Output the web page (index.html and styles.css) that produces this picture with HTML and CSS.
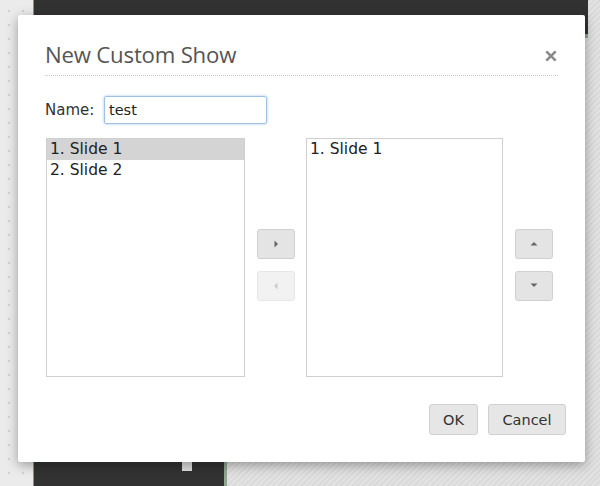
FILE: index.html
```html
<!DOCTYPE html>
<html>
<head>
<meta charset="utf-8">
<link rel="stylesheet" href="styles.css">
</head>
<body>
<div class="desk">
  <div class="rail"></div>
  <div class="stage">
    <div class="slide-top"></div>
    <div class="slide-bottom"><span class="cam"></span></div>
  </div>
</div>
<div class="dialog">
  <div class="header">
    <h1 class="title">New Custom Show</h1>
    <span class="close" aria-label="Close">
      <svg width="12" height="12" viewBox="0 0 12 12"><path d="M1.3 1.3 L10.7 10.7 M10.7 1.3 L1.3 10.7" stroke="#8a8a8a" stroke-width="2.6" stroke-linecap="butt"/></svg>
    </span>
  </div>
  <div class="name-row">
    <label class="name-label">Name:</label>
    <div class="name-input">test</div>
  </div>
  <div class="lists">
    <div class="listbox">
      <div class="item selected">1. Slide 1</div>
      <div class="item">2. Slide 2</div>
    </div>
    <div class="mid-buttons">
      <button class="sq">
        <svg width="6" height="8" viewBox="0 0 6 8"><path d="M1.5 0.5 L5 4 L1.5 7.5 Z" fill="#666"/></svg>
      </button>
      <button class="sq disabled">
        <svg width="6" height="8" viewBox="0 0 6 8"><path d="M4.5 0.5 L1 4 L4.5 7.5 Z" fill="#ccc"/></svg>
      </button>
    </div>
    <div class="listbox narrow">
      <div class="item">1. Slide 1</div>
    </div>
    <div class="mid-buttons end">
      <button class="sq">
        <svg width="8" height="5" viewBox="0 0 8 5"><path d="M0.5 4.5 L4 1 L7.5 4.5 Z" fill="#666"/></svg>
      </button>
      <button class="sq">
        <svg width="8" height="5" viewBox="0 0 8 5"><path d="M0.5 0.5 L4 4 L7.5 0.5 Z" fill="#666"/></svg>
      </button>
    </div>
  </div>
  <div class="footer">
    <button class="btn ok">OK</button>
    <button class="btn cancel">Cancel</button>
  </div>
</div>
</body>
</html>
```
FILE: styles.css
```css
html, body {
  margin: 0;
  padding: 0;
  width: 600px;
  height: 486px;
  overflow: hidden;
  font-family: "DejaVu Sans", "Open Sans", sans-serif;
}
body {
  background: #e6e6e6;
  position: relative;
}
.desk {
  display: flex;
  height: 486px;
}
.rail {
  width: 33px;
  background-color: #ebebeb;
  background-image: radial-gradient(circle, #d2d2d2 1.3px, transparent 1.6px);
  background-size: 14px 14px;
  background-position: 2px 4px;
}
.stage {
  flex: 1;
  display: flex;
  flex-direction: column;
  justify-content: space-between;
  background: repeating-linear-gradient(135deg, #dadada 0 2px, #e2e2e2 2px 4px);
}
.slide-top {
  height: 34px;
  margin-right: 12px;
  background: #323232;
  border-bottom: 4px solid #8ea58e;
  border-left: 1px solid #7d9a7d;
}
.slide-bottom {
  position: relative;
  height: 24px;
  width: 190px;
  background: #323232;
  border-right: 3px solid #8ea58e;
  border-left: 1px solid #7d9a7d;
}
.cam {
  position: absolute;
  left: 148px;
  top: 0;
  width: 10px;
  height: 9px;
  background: #ddd;
}
.dialog {
  position: absolute;
  left: 18px;
  top: 15px;
  width: 567px;
  height: 447px;
  box-sizing: border-box;
  background: #fff;
  border-radius: 2px;
  box-shadow: 0 3px 12px rgba(0,0,0,0.35);
  padding: 29px 27px 0 27px;
  display: flex;
  flex-direction: column;
}
.header {
  display: flex;
  justify-content: space-between;
  align-items: center;
  height: 22px;
  padding-bottom: 9px;
  border-bottom: 1px dotted #c8c8c8;
}
.title {
  margin: 0;
  font-family: "Open Sans", "DejaVu Sans", sans-serif;
  font-size: 22.2px;
  font-weight: 400;
  color: #555;
  line-height: 28px;
  letter-spacing: -0.2px;
}
.close {
  display: flex;
  width: 12px;
  height: 12px;
  margin-right: 1px;
  margin-top: 1px;
}
.name-row {
  display: flex;
  align-items: center;
  margin-top: 20px;
  height: 28px;
}
.name-label {
  font-size: 15px;
  color: #333;
  width: 59px;
}
.name-input {
  width: 163px;
  height: 28px;
  box-sizing: border-box;
  border: 1px solid #9ec1e6;
  box-shadow: 0 0 3px rgba(110,160,220,0.6);
  border-radius: 2px;
  font-size: 14.5px;
  padding: 2px 4px;
  line-height: 22px;
  color: #222;
}
.lists {
  display: flex;
  margin-top: 14px;
  height: 239px;
  align-items: stretch;
}
.listbox {
  flex: 0 0 199px;
  box-sizing: border-box;
  border: 1px solid #cfcfcf;
  background: #fff;
}
.listbox:first-child {
  margin-left: 1px;
}
.listbox.narrow {
  flex-basis: 197px;
}
.item {
  font-size: 15.5px;
  line-height: 21px;
  height: 21px;
  padding-left: 3px;
  color: #222;
}
.item.selected {
  background: #d4d4d4;
}
.mid-buttons {
  flex: 0 0 61px;
  display: flex;
  flex-direction: column;
  align-items: center;
  justify-content: center;
  gap: 12px;
  padding-top: 14px;
  box-sizing: border-box;
}
.mid-buttons.end {
  flex: 0 0 50px;
  align-items: flex-end;
}
.sq {
  width: 38px;
  height: 30px;
  border: 1px solid #d0d0d0;
  border-radius: 3px;
  background: #e4e4e4;
  display: flex;
  align-items: center;
  justify-content: center;
  padding: 0;
}
.sq.disabled {
  background: #f2f2f2;
  border-color: #e6e6e6;
}
.footer {
  display: flex;
  justify-content: flex-end;
  gap: 10px;
  margin-top: 27px;
  margin-right: -8px;
}
.btn {
  height: 31px;
  box-sizing: border-box;
  border: 1px solid #d0d0d0;
  border-radius: 3px;
  background: #e6e6e6;
  font-family: "DejaVu Sans", "Open Sans", sans-serif;
  font-size: 14.5px;
  color: #333;
  padding: 0;
}
.ok { width: 49px; }
.cancel { width: 78px; }
```
